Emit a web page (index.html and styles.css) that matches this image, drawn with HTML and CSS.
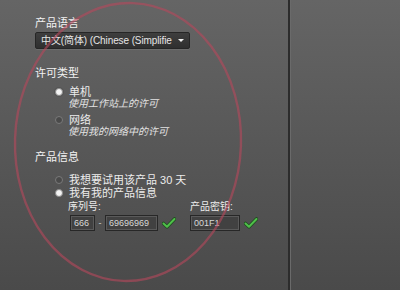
FILE: index.html
```html
<!DOCTYPE html>
<html lang="zh">
<head>
<meta charset="utf-8">
<link rel="stylesheet" href="styles.css">
</head>
<body>
<div class="screen">
  <div class="left">
    <div class="heading">产品语言</div>
    <div class="select">
      <span class="select-text">中文(简体) (Chinese (Simplifie</span>
      <span class="arrow"></span>
    </div>

    <div class="heading h2">许可类型</div>
    <div class="option o1">
      <span class="radio on"></span><span class="label">单机</span>
    </div>
    <div class="desc">使用工作站上的许可</div>
    <div class="option o2">
      <span class="radio"></span><span class="label">网络</span>
    </div>
    <div class="desc">使用我的网络中的许可</div>

    <div class="heading h3">产品信息</div>
    <div class="option o3">
      <span class="radio"></span><span class="label">我想要试用该产品 30 天</span>
    </div>
    <div class="option o4">
      <span class="radio on"></span><span class="label">我有我的产品信息</span>
    </div>
    <div class="fields">
      <div class="group serial">
        <div class="flabel">序列号:</div>
        <div class="inputs">
          <span class="box b1">666</span>
          <span class="dash">-</span>
          <span class="box b2">69696969</span>
          <svg class="check" viewBox="0 0 14 12" width="14" height="12"><path d="M1.5 6.5 L5 9.8 L12.5 2" fill="none" stroke="#1f4d1f" stroke-width="3.6" stroke-linecap="round" stroke-linejoin="round"/><path d="M1.5 6.5 L5 9.8 L12.5 2" fill="none" stroke="#4fbf4a" stroke-width="2" stroke-linecap="round" stroke-linejoin="round"/></svg>
        </div>
      </div>
      <div class="group key">
        <div class="flabel">产品密钥:</div>
        <div class="inputs">
          <span class="box b3">001F1</span>
          <svg class="check" viewBox="0 0 14 12" width="14" height="12"><path d="M1.5 6.5 L5 9.8 L12.5 2" fill="none" stroke="#1f4d1f" stroke-width="3.6" stroke-linecap="round" stroke-linejoin="round"/><path d="M1.5 6.5 L5 9.8 L12.5 2" fill="none" stroke="#4fbf4a" stroke-width="2" stroke-linecap="round" stroke-linejoin="round"/></svg>
        </div>
      </div>
    </div>
  </div>
  <div class="divider"></div>
  <div class="right"></div>
  <svg class="annotation" viewBox="0 0 400 290" width="400" height="290">
    <ellipse cx="128" cy="142" rx="113" ry="139" transform="rotate(2 128 142)" fill="none" stroke="#b8475c" stroke-opacity="0.6" stroke-width="2.4"/>
  </svg>
</div>
</body>
</html>
```

FILE: styles.css
```css
html, body {
  margin: 0;
  padding: 0;
}
body {
  width: 400px;
  height: 290px;
  overflow: hidden;
  font-family: "Liberation Sans", "Noto Sans CJK SC", sans-serif;
  color: #ececec;
}
.screen {
  position: relative;
  display: flex;
  width: 400px;
  height: 290px;
  background: linear-gradient(#656565, #4a4a4a);
}
.left {
  width: 288px;
  padding: 16px 0 0 35px;
  box-sizing: border-box;
  display: flex;
  flex-direction: column;
  align-items: flex-start;
}
.divider {
  width: 2px;
  background: #2c2c2c;
  box-shadow: 1px 0 0 #6a6a6a;
}
.right {
  flex: 1;
}
.heading {
  font-size: 11px;
  line-height: 14px;
  color: #f2f2f2;
}
.select {
  margin-top: 2px;
  width: 155px;
  height: 17px;
  box-sizing: border-box;
  border: 1px solid #262626;
  border-radius: 2px;
  background: linear-gradient(#3e3e3e, #2f2f2f);
  display: flex;
  align-items: center;
  padding-left: 5px;
  box-shadow: 0 1px 0 rgba(255,255,255,0.08);
}
.select-text {
  font-size: 10px;
  line-height: 15px;
  color: #e6e6e6;
  white-space: nowrap;
  letter-spacing: -0.1px;
}
.arrow {
  margin-left: auto;
  margin-right: 5px;
  width: 0;
  height: 0;
  border-left: 3px solid transparent;
  border-right: 3px solid transparent;
  border-top: 3px solid #f0f0f0;
}
.h2 { margin-top: 17px; }
.h3 { margin-top: 13px; }
.option {
  display: flex;
  align-items: center;
  margin-left: 20px;
  height: 12px;
}
.o1 { margin-top: 6px; }
.o2 { margin-top: 5px; }
.o3 { margin-top: 10px; }
.o4 { margin-top: 1px; }
.radio {
  width: 6px;
  height: 6px;
  border-radius: 50%;
  border: 1px solid #7a7a7a;
  background: #4a4a4a;
  margin-right: 6px;
}
.radio.on {
  background: #f4f4f4;
  border-color: #8a8a8a;
  box-shadow: 0 0 0 1px #555;
}
.label {
  font-size: 11px;
  line-height: 12px;
  color: #ececec;
  white-space: nowrap;
}
.desc {
  margin-left: 33px;
  font-size: 10px;
  line-height: 11px;
  font-style: italic;
  color: #e2e2e2;
  white-space: nowrap;
}
.fields {
  display: flex;
  margin-left: 33px;
  margin-top: 2px;
  gap: 14px;
}
.group {
  display: flex;
  flex-direction: column;
}
.flabel {
  font-size: 10px;
  line-height: 12px;
  color: #ececec;
}
.inputs {
  margin-top: 2px;
  display: flex;
  align-items: center;
}
.serial .inputs { margin-left: 2px; }
.box {
  height: 16px;
  box-sizing: border-box;
  border: 1px solid #272727;
  background: #414141;
  box-shadow: inset 0 0 0 1px #5a5a5a;
  font-size: 9px;
  line-height: 14px;
  padding-left: 3px;
  color: #d8d8d8;
}
.b1 { width: 25px; }
.b2 { width: 53px; }
.b3 { width: 50px; }
.dash {
  width: 10px;
  text-align: center;
  font-size: 9px;
  color: #cfcfcf;
}
.check {
  margin-left: 4px;
}
.annotation {
  position: absolute;
  left: 0;
  top: 0;
  pointer-events: none;
  filter: blur(0.4px);
}
```
